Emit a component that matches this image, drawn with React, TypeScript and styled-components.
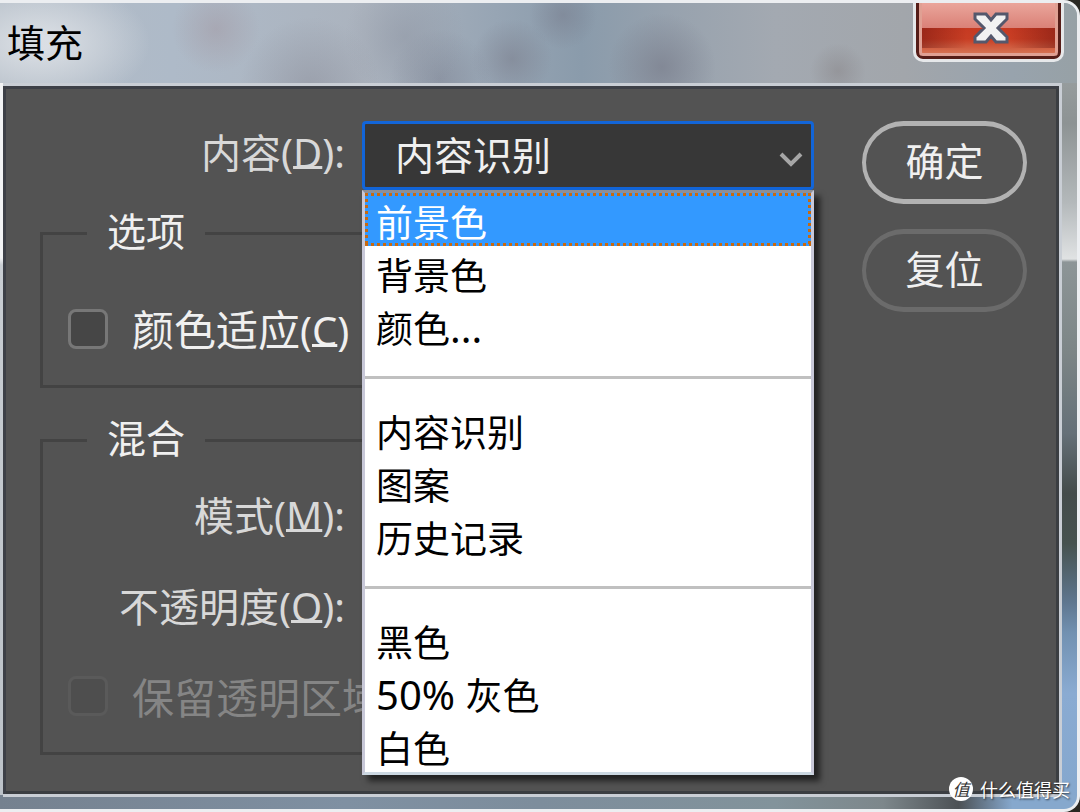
import React from "react";
import styled, { createGlobalStyle, css } from "styled-components";

const cjk = `"Noto Sans CJK SC", sans-serif`;

const GlobalStyle = createGlobalStyle`
  * { box-sizing: border-box; }
  html { height: 100%; background: #2a2823; }
  body { margin: 0; height: 100%; font-family: ${cjk}; }
  #root { height: 100%; }
  button, select, input { font-family: inherit; }
`;

const Window = styled.div`
  position: relative;
  display: flex;
  flex-direction: column;
  min-height: 100%;
  border: solid #eceef1;
  border-width: 3px 3px 3px 0;
  border-radius: 0 16px 16px 0;
  overflow: hidden;
  background:
    linear-gradient(to right, #75818f, #7f90a2 32%, #7d8d9c 50%, #82939b 72%, #7d878b 82%, #4c5155 89%, #86a8cd 94%, #86a8cd) bottom / 100% 14px no-repeat,
    linear-gradient(#9aa5ad 0, #969c9d 80px, #8d9394 120px, #b4b9bb 200px, #e0e2e3 256px, #8d9597 259px, #7c8586 350px, #657078 430px, #444c4b 490px, #46524f 540px, #5f7790 600px, #7291b1 630px, #8aabd2 690px, #84a7cd) right / 20px 100% no-repeat,
    linear-gradient(#f2f3f4 0, #f2f3f4 255px, #c8cdd2 262px, #bcc2c8) left / 6px 100% no-repeat,
    #8c96a2;
`;

const TitleBar = styled.header`
  display: flex;
  align-items: flex-start;
  justify-content: space-between;
  height: 80px;
  padding: 0 13px 0 7px;
  background:
    radial-gradient(ellipse 110px 64px at 40px 40px, rgba(222, 226, 231, 0.9) 10%, rgba(215, 220, 226, 0.5) 60%, rgba(215, 220, 226, 0)),
    radial-gradient(circle 44px at 216px 26px, rgba(162, 152, 162, 0.5), rgba(162, 152, 162, 0)),
    radial-gradient(circle 70px at 310px 84px, rgba(138, 140, 152, 0.5), rgba(138, 140, 152, 0)),
    radial-gradient(circle 60px at 405px 34px, rgba(136, 142, 156, 0.4), rgba(136, 142, 156, 0)),
    radial-gradient(circle 50px at 440px 76px, rgba(122, 128, 144, 0.5), rgba(122, 128, 144, 0)),
    radial-gradient(circle 40px at 512px 56px, rgba(120, 122, 136, 0.5), rgba(120, 122, 136, 0)),
    radial-gradient(circle 34px at 563px 12px, rgba(122, 128, 144, 0.6), rgba(122, 128, 144, 0)),
    radial-gradient(circle 54px at 662px 64px, rgba(122, 126, 140, 0.7), rgba(122, 126, 140, 0)),
    radial-gradient(circle 28px at 838px 68px, rgba(140, 138, 142, 0.6), rgba(140, 138, 142, 0)),
    linear-gradient(to right, #b3bcc6 0, #aebac8 16%, #abb3be 34%, #97a5b4 46%, #8a9bab 54%, #97a2ae 62%, #a3a9b1 72%, #a2a6ab 84%, #98a3ad 94%, #97a1a6);
`;

const Title = styled.h1`
  margin: 10px 0 0;
  color: #000;
  font-size: 38px;
  line-height: 56px;
  font-weight: 400;
`;

const CloseButton = styled.button`
  display: flex;
  align-items: center;
  justify-content: center;
  width: 151px;
  height: 59px;
  padding: 0 0 6px 4px;
  border: solid #e6e8ea;
  border-width: 0 3px 3px;
  border-radius: 0 0 10px 10px;
  background:
    linear-gradient(to right, rgba(90, 10, 10, 0.45), rgba(90, 10, 10, 0) 35%, rgba(90, 10, 10, 0) 65%, rgba(90, 10, 10, 0.45)) 0 25px / 100% 20px no-repeat,
    linear-gradient(#eaa59b 0, #da8177 25px, #c63a22 25px, #c83e24 36px, #d98060 54px);
  box-shadow: inset 0 -3px #551d18, inset 3px 0 #551d18, inset -3px 0 #551d18,
    inset 0 -6px #e0a093, inset 6px 0 #e0a093, inset -6px 0 #e0a093;
`;

const Panel = styled.main`
  flex: 1;
  display: flex;
  justify-content: space-between;
  margin: 0 15px 12px 3px;
  padding: 35px 32px 32px 37px;
  border: solid #c9ced5;
  border-width: 3px 3px 3px 0;
  background: #535353;
  box-shadow: inset 3px 3px #3d4047, inset -3px -3px #3b3e42;
`;

const Form = styled.form`
  flex: 1;
  max-width: 774px;
  margin-right: 48px;
`;

const Row = styled.div`
  display: flex;
  align-items: flex-start;
`;

const FieldLabel = styled.label<{ $inset?: boolean }>`
  flex: none;
  width: ${(p) => (p.$inset ? 319 : 322)}px;
  padding-right: 17px;
  color: #d8d8d8;
  font-size: 40px;
  line-height: 60px;
  text-align: right;
  white-space: nowrap;
`;

const Latin = styled.span`
  font-family: "Noto Sans", sans-serif;
  font-size: 40px;
`;

const Key = styled.u`
  text-decoration-thickness: 3px;
  text-underline-offset: -2px;
  text-decoration-skip-ink: none;
`;

const Dropdown = styled.div`
  position: relative;
  flex: 1;
`;

const Select = styled.select`
  display: block;
  appearance: none;
  width: 100%;
  height: 69px;
  padding: 0 60px 6px 30px;
  border: 3px solid #1265d8;
  border-radius: 4px;
  outline: none;
  background: #373737;
  color: #f0f0f0;
  font-size: 39px;
`;

const Chevron = styled.svg`
  position: absolute;
  top: 30px;
  right: 10px;
  pointer-events: none;
`;

const Menu = styled.ul`
  position: absolute;
  z-index: 2;
  top: 100%;
  left: 0;
  right: 0;
  margin: 0;
  padding: 0;
  list-style: none;
  border: 3px solid #c8c8d8;
  border-top-color: #8c8f98;
  border-bottom-color: #ccd8e2;
  background: #fff;
  box-shadow: 6px 6px 6px rgba(0, 0, 0, 0.6);
`;

const focusDots = css`
  background:
    repeating-linear-gradient(to right, #c8690f 0 3px, transparent 3px 6px) top / 100% 3px no-repeat,
    repeating-linear-gradient(to right, #c8690f 0 3px, transparent 3px 6px) bottom / 100% 3px no-repeat,
    repeating-linear-gradient(#c8690f 0 3px, transparent 3px 6px) left / 3px 100% no-repeat,
    repeating-linear-gradient(#c8690f 0 3px, transparent 3px 6px) right / 3px 100% no-repeat,
    #3399ff;
`;

const MenuItem = styled.li<{ $active?: boolean }>`
  height: 53px;
  padding: 0 11px;
  color: ${(p) => (p.$active ? "#fff" : "#000")};
  font-size: 37px;
  line-height: 56px;
  white-space: nowrap;
  ${(p) => p.$active && focusDots}
`;

const Separator = styled.li`
  height: 3px;
  margin: 24px 0;
  background: #c0c0c0;
`;

const Group = styled.fieldset<{ $top: number }>`
  display: grid;
  gap: 29px;
  min-width: 0;
  margin: 21px 0 0;
  padding: ${(p) => p.$top}px 0 26px;
  border: 3px solid #434343;

  & + & {
    margin-top: 30px;
  }
`;

const Legend = styled.legend`
  margin-left: 44px;
  padding: 0 20px 8px;
  color: #f0f0f0;
  font-size: 39px;
  line-height: 36px;
`;

const CheckLabel = styled.label<{ $disabled?: boolean }>`
  display: flex;
  align-items: center;
  gap: 24px;
  height: 60px;
  padding-left: 25px;
  color: ${(p) => (p.$disabled ? "#858585" : "#f0f0f0")};
  font-size: 42px;
  line-height: 60px;
  white-space: nowrap;
`;

const Checkbox = styled.input`
  appearance: none;
  flex: none;
  width: 40px;
  height: 40px;
  margin: 0;
  border: 3px solid #777;
  border-radius: 8px;
  background: #464646;

  &:disabled {
    border-color: #5a5a5a;
    background: #4e4e4e;
  }
`;

const Blank = styled.input`
  width: 160px;
  height: 60px;
  border: 3px solid #434343;
  background: #464646;
`;

const Actions = styled.div`
  display: flex;
  flex-direction: column;
  gap: 25px;
`;

const PillButton = styled.button<{ $primary?: boolean }>`
  width: 165px;
  height: 83px;
  padding: 0 0 8px;
  border: solid ${(p) => (p.$primary ? "#b2b2b2" : "#6b6b6b")};
  border-width: 5px 4px;
  border-radius: 42px;
  background: transparent;
  color: #f0f0f0;
  font-size: 39px;
  line-height: 60px;
`;

const Watermark = styled.footer`
  position: absolute;
  right: 7px;
  bottom: 6px;
  display: flex;
  align-items: center;
  gap: 7px;
  color: #fff;
  font-size: 18px;
  line-height: 28px;
  text-shadow: 1px 1px 2px rgba(0, 0, 0, 0.7);
`;

const Seal = styled.span`
  width: 24px;
  height: 24px;
  border-radius: 50%;
  background: #fff;
  color: #333;
  font-size: 17px;
  line-height: 23px;
  text-align: center;
  text-shadow: none;
  font-style: italic;
`;

const Mnemonic = ({ letter, colon }: { letter: string; colon?: boolean }) => (
  <Latin>
    (<Key>{letter}</Key>){colon && ":"}
  </Latin>
);

export default function App() {
  return (
    <>
      <GlobalStyle />
      <Window>
        <TitleBar>
          <Title>填充</Title>
          <CloseButton type="button" aria-label="关闭">
            <svg width="36" height="32" viewBox="0 0 36 32">
              <path
                d="M2 2H13L18 8L23 2H34V7L25 16L34 25V30H23L18 24L13 30H2V25L11 16L2 7Z"
                fill="#f2f2f2"
                stroke="#55586c"
                strokeWidth="3"
              />
            </svg>
          </CloseButton>
        </TitleBar>
        <Panel>
          <Form>
            <Row>
              <FieldLabel htmlFor="content">
                内容
                <Mnemonic letter="D" colon />
              </FieldLabel>
              <Dropdown>
                <Select id="content">
                  <option>内容识别</option>
                </Select>
                <Chevron width="26" height="18" viewBox="0 0 26 18">
                  <path d="M3 3L13 13L23 3" fill="none" stroke="#a6a6a6" strokeWidth="4" />
                </Chevron>
                <Menu role="listbox" aria-label="内容">
                  <MenuItem role="option" aria-selected $active>前景色</MenuItem>
                  <MenuItem role="option">背景色</MenuItem>
                  <MenuItem role="option">颜色<Latin>...</Latin></MenuItem>
                  <Separator role="separator" />
                  <MenuItem role="option">内容识别</MenuItem>
                  <MenuItem role="option">图案</MenuItem>
                  <MenuItem role="option">历史记录</MenuItem>
                  <Separator role="separator" />
                  <MenuItem role="option">黑色</MenuItem>
                  <MenuItem role="option"><Latin>50% </Latin>灰色</MenuItem>
                  <MenuItem role="option">白色</MenuItem>
                </Menu>
              </Dropdown>
            </Row>
            <Group $top={44}>
              <Legend>选项</Legend>
              <CheckLabel>
                <Checkbox type="checkbox" />
                <span>
                  颜色适应
                  <Mnemonic letter="C" />
                </span>
              </CheckLabel>
            </Group>
            <Group $top={22}>
              <Legend>混合</Legend>
              <Row>
                <FieldLabel $inset htmlFor="mode">
                  模式
                  <Mnemonic letter="M" colon />
                </FieldLabel>
                <Blank id="mode" />
              </Row>
              <Row>
                <FieldLabel $inset htmlFor="opacity">
                  不透明度
                  <Mnemonic letter="O" colon />
                </FieldLabel>
                <Blank id="opacity" />
              </Row>
              <CheckLabel $disabled>
                <Checkbox type="checkbox" disabled />
                <span>保留透明区域</span>
              </CheckLabel>
            </Group>
          </Form>
          <Actions>
            <PillButton type="button" $primary>确定</PillButton>
            <PillButton type="button">复位</PillButton>
          </Actions>
        </Panel>
        <Watermark>
          <Seal>值</Seal>
          什么值得买
        </Watermark>
      </Window>
    </>
  );
}
